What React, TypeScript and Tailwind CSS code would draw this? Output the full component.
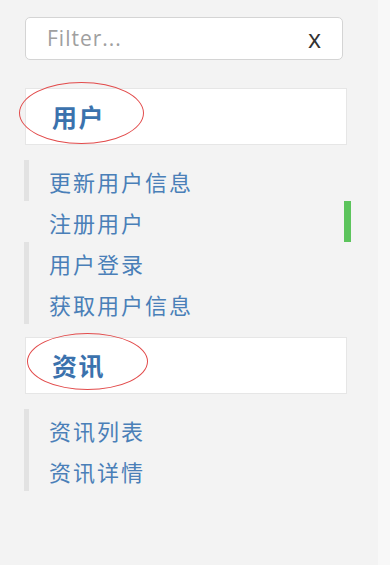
const sections = [
  {
    title: "用户",
    ring: "left-[-7px] top-[-7px] w-[125px] h-[62px]",
    items: [
      { label: "更新用户信息" },
      { label: "注册用户", active: true },
      { label: "用户登录" },
      { label: "获取用户信息" },
    ],
  },
  {
    title: "资讯",
    ring: "left-[1px] top-[-5px] w-[121px] h-[57px]",
    items: [{ label: "资讯列表" }, { label: "资讯详情" }],
  },
];

const cjk = { fontFamily: '"Noto Sans CJK SC", "Noto Sans", sans-serif' };

export default function App() {
  return (
    <div className="flex h-[565px] w-[390px] bg-[#f8f8f8]" style={cjk}>
      <div className="w-[378px] bg-[#f3f3f3] pl-[24px] pt-[17px]">
        {/* Filter */}
        <div className="ml-px flex h-[43px] w-[318px] items-center justify-between rounded-[5px] border border-[#d4d4d4] bg-white pl-[21px] pr-[21px]"
          style={{ fontFamily: '"Open Sans", "Liberation Sans", sans-serif' }}>
          <span className="text-[21px] tracking-[1px] text-[#a0a0a0]">Filter...</span>
          <span className="text-[25px] leading-none text-[#333]">x</span>
        </div>

        <div className="mt-[28px] flex flex-col gap-[13px]">
          {sections.map((s) => (
            <div key={s.title} className="flex flex-col">
              {/* Section header */}
              <div className="relative ml-px flex h-[57px] w-[322px] items-center border border-[#e6e6e6] bg-white pl-[26px]">
                <span className="text-[25px] font-bold leading-none tracking-[1.5px] text-[#3b72ad]">{s.title}</span>
                <span className={`pointer-events-none absolute rounded-[50%] border-[1.5px] border-[#e24b4b] ${s.ring}`} />
              </div>

              {/* Items */}
              <div className="mt-[15px] flex w-[327px] flex-col">
                {s.items.map((it) => (
                  <div key={it.label} className="flex h-[41px] items-center">
                    <div className={`h-full w-[5px] ${it.active ? "" : "bg-[#e2e2e2]"}`} />
                    <span className="flex-1 pl-[20px] text-[22px] leading-none tracking-[2px] text-[#4a7fb8]">{it.label}</span>
                    {it.active && <div className="h-full w-[7px] bg-[#5cc45c]" />}
                  </div>
                ))}
              </div>
            </div>
          ))}
        </div>
      </div>
      <div className="flex-1" />
    </div>
  );
}
